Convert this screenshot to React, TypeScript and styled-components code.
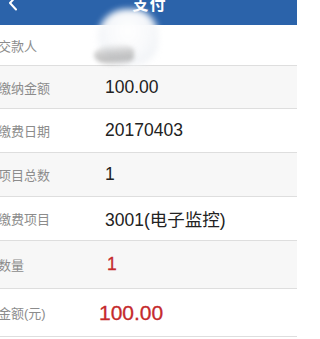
import styled, { createGlobalStyle } from "styled-components";

const GlobalStyle = createGlobalStyle`
  html, body {
    margin: 0;
    padding: 0;
    background: #ffffff;
    overflow: hidden;
  }
  body {
    font-family: "Liberation Sans", "Noto Sans CJK SC", sans-serif;
  }
`;

type Item = {
  label: string;
  value: string;
  red?: boolean;
  big?: boolean;
  shaded?: boolean;
  height: number;
};

const items: Item[] = [
  { label: "交款人", value: "", height: 41 },
  { label: "缴纳金额", value: "100.00", shaded: true, height: 43 },
  { label: "缴费日期", value: "20170403", height: 44 },
  { label: "项目总数", value: "1", shaded: true, height: 44 },
  { label: "缴费项目", value: "3001(电子监控)", height: 44 },
  { label: "数量", value: "1", red: true, shaded: true, height: 48 },
  { label: "金额(元)", value: "100.00", red: true, big: true, height: 48 },
];

const App = () => {
  return (
    <Page>
      <GlobalStyle />
      <Header>
        <Back>
          <svg width="10" height="16" viewBox="0 0 10 16">
            <path
              d="M8 1.5 L2 8 L8 14.5"
              fill="none"
              stroke="#ffffff"
              strokeWidth="2"
              strokeLinecap="round"
              strokeLinejoin="round"
            />
          </svg>
        </Back>
        <Title>支付</Title>
        <Spacer />
      </Header>
      <List>
        {items.map((item) => (
          <Row key={item.label} shaded={item.shaded} h={item.height}>
            <Label>{item.label}</Label>
            <Value red={item.red} big={item.big}>
              {item.value}
            </Value>
          </Row>
        ))}
      </List>
      {/* the payer's name is smudged out in the picture */}
      <Smudge>
        <SmudgeLight />
        <SmudgeStreaks />
      </Smudge>
    </Page>
  );
};

export default App;

const Page = styled.div`
  position: relative;
  width: 297px;
  height: 339px;
  overflow: hidden;
  background: #ffffff;
`;

const Header = styled.div`
  height: 44px;
  margin-top: -19px;
  padding: 0 8px;
  box-sizing: border-box;
  background-color: #2b63aa;
  display: grid;
  grid-template-columns: 40px 1fr 40px;
  align-items: center;
`;

const Back = styled.div`
  display: flex;
  align-items: center;
`;

const Spacer = styled.div``;

const Title = styled.div`
  text-align: center;
  color: #ffffff;
  font-size: 16px;
  font-weight: 600;
  letter-spacing: 1px;
  padding-left: 2px;
`;

const List = styled.div`
  display: flex;
  flex-direction: column;
`;

const Row = styled.div<{ shaded?: boolean; h: number }>`
  height: ${({ h }) => h}px;
  display: flex;
  align-items: center;
  background-color: ${({ shaded }) => (shaded ? "#f7f7f7" : "#ffffff")};
  border-bottom: 1px solid #dedede;
  box-sizing: border-box;
`;

const Label = styled.div`
  width: 104px;
  margin-left: -2px;
  flex-shrink: 0;
  font-size: 13px;
  color: #8c8c8c;
`;

const Value = styled.div<{ red?: boolean; big?: boolean }>`
  font-size: ${({ big }) => (big ? "21px" : "17.5px")};
  color: ${({ red }) => (red ? "#c52a2c" : "#222222")};
  -webkit-text-stroke: ${({ red }) => (red ? "0.3px #c52a2c" : "0")};
  margin-left: ${({ big, red }) => (big ? "-3px" : red ? "5px" : "3px")};
  white-space: nowrap;
`;

const Smudge = styled.div`
  position: absolute;
  left: 92px;
  top: 9px;
  width: 68px;
  height: 58px;
`;

const SmudgeLight = styled.div`
  position: absolute;
  left: 6px;
  top: 0;
  width: 60px;
  height: 56px;
  border-radius: 50% 45% 40% 55%;
  background: radial-gradient(
    ellipse at 50% 40%,
    rgba(255, 255, 255, 1) 0%,
    rgba(248, 249, 251, 0.98) 50%,
    rgba(238, 241, 245, 0.8) 72%,
    rgba(255, 255, 255, 0) 100%
  );
  filter: blur(3px);
`;

const SmudgeStreaks = styled.div`
  position: absolute;
  left: 2px;
  top: 36px;
  width: 40px;
  height: 20px;
  border-radius: 50% 30% 40% 50%;
  background: linear-gradient(
    175deg,
    rgba(170, 170, 170, 0) 0%,
    rgba(160, 160, 160, 0.5) 40%,
    rgba(140, 140, 140, 0.55) 70%,
    rgba(200, 200, 200, 0) 100%
  );
  filter: blur(2px);
`;
